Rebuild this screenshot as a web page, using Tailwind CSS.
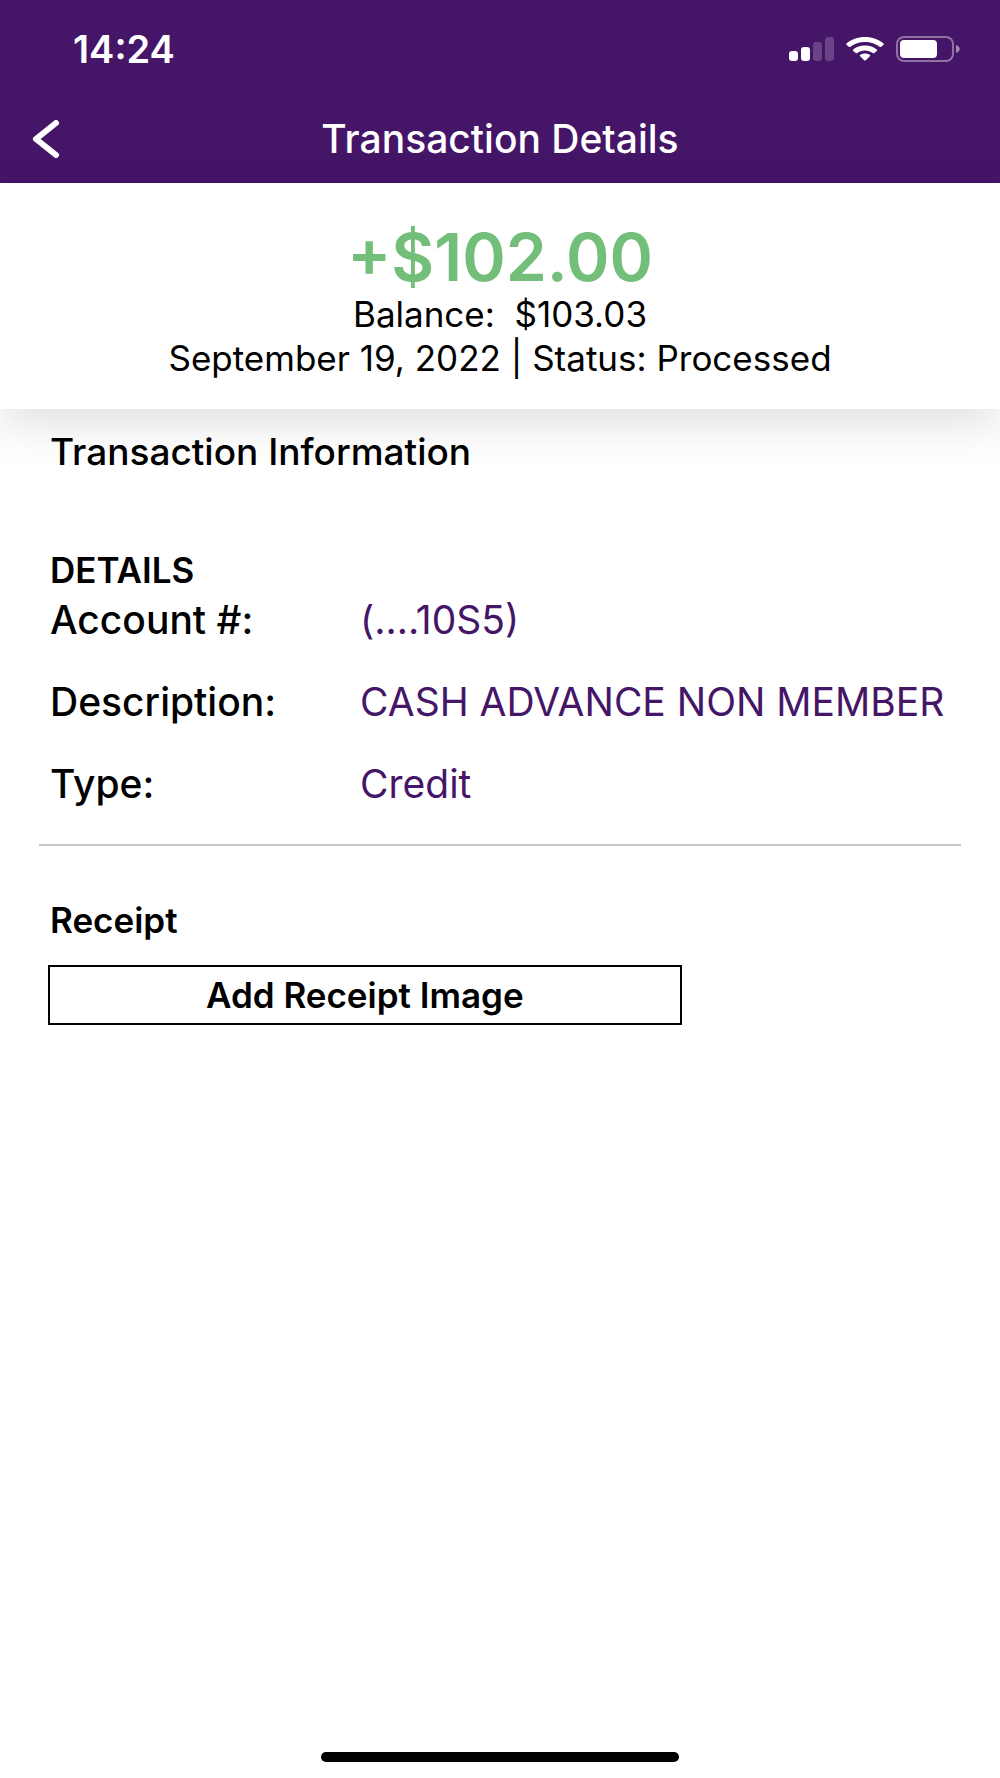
<!DOCTYPE html>
<html lang="en">
    <head>
        <meta charset="UTF-8">
        <meta name="viewport" content="width=device-width, initial-scale=1">
        <title>Transaction Details</title>
        <script src="https://cdn.jsdelivr.net/npm/@tailwindcss/browser@4"></script>
    </head>
    <body class="min-h-screen flex flex-col bg-white text-black font-['Inter',sans-serif]">
        <header class="bg-[#451568] text-white">
            <!-- Status Bar -->
            <div class="h-24 pt-0.5 pl-[73px] pr-10 flex items-center justify-between">
                <time class="text-[38px] leading-10 font-semibold">14:24</time>
                <div class="flex items-center gap-3">
                    <svg class="w-[45px] h-6" viewBox="0 0 45 24" fill="currentColor" aria-label="Signal">
                        <rect x="0" y="14" width="9" height="10" rx="3"/>
                        <rect x="12" y="10" width="9" height="14" rx="3"/>
                        <rect x="24" y="5" width="9" height="19" rx="3" opacity=".2"/>
                        <rect x="36" y="0" width="9" height="24" rx="3" opacity=".2"/>
                    </svg>
                    <svg class="w-[38px] h-6" viewBox="0 0 38 24" fill="currentColor" aria-label="Wi-Fi">
                        <path d="M19 0C11.6 0 5.2 2.5.5 6.4q-.8.7 0 1.4l2.3 2q.8.6 1.6 0C8.300 6.700 13.300 5 19 5s10.700 1.700 14.600 4.800q.8.6 1.600 0l2.300-2q.8-.7 0-1.400C32.800 2.500 26.400 0 19 0Z"/>
                        <path d="M19 8.500c-4.600 0-8.700 1.500-11.800 4q-.8.7 0 1.400l2.500 2q.8.6 1.600 0c2.100-1.600 4.800-2.500 7.700-2.500s5.600.9 7.700 2.500q.8.6 1.600 0l2.500-2q.8-.7 0-1.400c-3.100-2.500-7.200-4-11.800-4Z"/>
                        <path d="M19 16.500c-1.900 0-3.600.5-4.900 1.500q-.8.6 0 1.300l4.100 3.900q.8.7 1.600 0l4.100-3.900q.8-.7 0-1.300c-1.300-1-3-1.500-4.900-1.500Z"/>
                    </svg>
                    <svg class="w-16 h-[26px]" viewBox="0 0 64 26" aria-label="Battery">
                        <rect x="1" y="1" width="56" height="24" rx="7" fill="none" stroke="currentColor" stroke-width="2" opacity=".4"/>
                        <rect x="4" y="4" width="37" height="18" rx="4" fill="currentColor"/>
                        <path d="M60 9c5 2 5 6 0 8Z" fill="currentColor" opacity=".5"/>
                    </svg>
                </div>
            </div>
            <!-- Nav Bar -->
            <div class="h-[87px] px-8 pb-0.5 grid grid-cols-[1fr_auto_1fr] items-center">
                <a href="#" aria-label="Back" class="justify-self-start">
                    <svg class="w-7 h-[38px]" viewBox="0 0 28 38" fill="none" stroke="currentColor" stroke-width="6" stroke-linecap="round" stroke-linejoin="round">
                        <path d="M24 3 4 19 24 35"/>
                    </svg>
                </a>
                <h1 class="text-[39px] leading-10 font-medium">Transaction Details</h1>
            </div>
        </header>

        <!-- Summary -->
        <section class="relative h-[226px] pt-[39px] text-center bg-white shadow-[0_14px_44px_rgba(0,0,0,0.13)]">
            <p class="text-[66px] leading-[70px] font-semibold text-[#73bf7a]">+$102.00</p>
            <p class="text-[35px] leading-[44px]">Balance:&nbsp; $103.03</p>
            <p class="text-[35px] leading-[44px]">September 19, 2022 | Status: Processed</p>
        </section>

        <main class="grow px-[50px]">
            <h2 class="mt-[23px] text-[37px] leading-10 font-medium">Transaction Information</h2>

            <section class="mt-[78px]">
                <h3 class="text-[35px] leading-10 font-semibold">DETAILS</h3>
                <dl class="mt-2.5 grid grid-cols-[310px_1fr] gap-y-[42px] text-[39px] leading-10">
                    <dt class="font-medium">Account #:</dt>
                    <dd class="text-[#451568] whitespace-nowrap">(....10S5)</dd>
                    <dt class="font-medium">Description:</dt>
                    <dd class="text-[#451568] whitespace-nowrap">CASH ADVANCE NON MEMBER</dd>
                    <dt class="font-medium">Type:</dt>
                    <dd class="text-[#451568] whitespace-nowrap">Credit</dd>
                </dl>
            </section>

            <hr class="-mx-[11px] mt-10 border-t-2 border-[#c8c8c8]">

            <section class="mt-[54px]">
                <h3 class="text-[35px] leading-10 font-semibold">Receipt</h3>
                <button type="button" class="-ml-0.5 mt-[25px] w-[70.4%] h-[60px] border-2 border-black text-[35px] leading-10 font-semibold">Add Receipt Image</button>
            </section>
        </main>

        <div class="mx-auto mb-4 h-2.5 w-[358px] rounded-full bg-black"></div>
    </body>
</html>
